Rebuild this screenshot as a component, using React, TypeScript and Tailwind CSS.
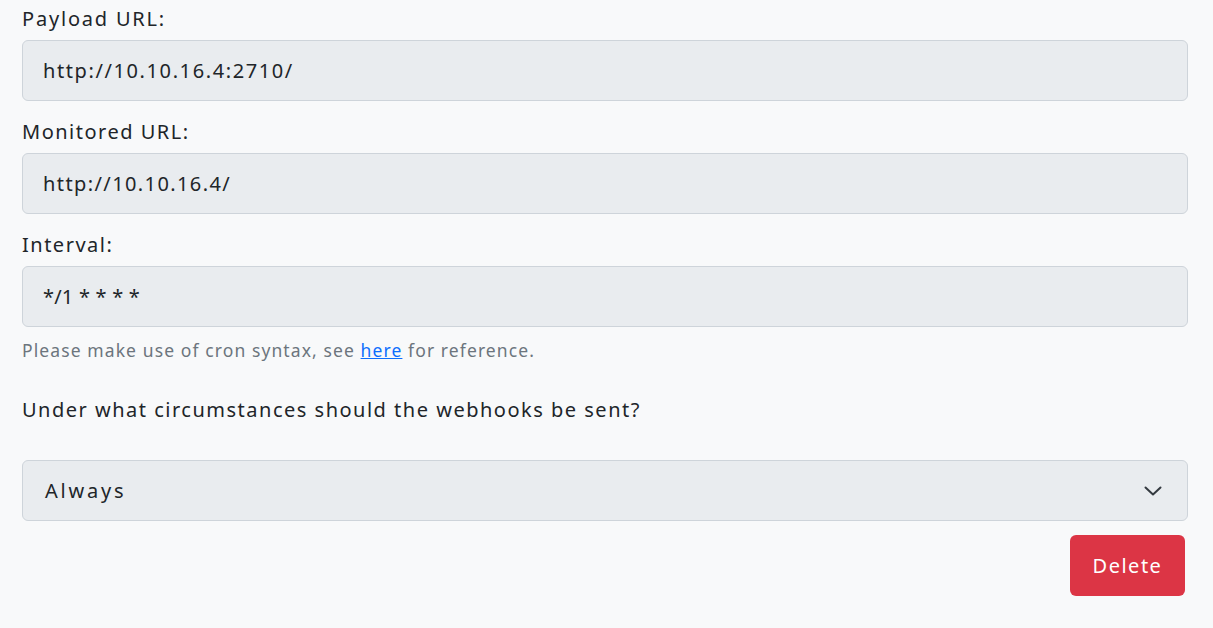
import React from "react";

const font = { fontFamily: '"Noto Sans", "Open Sans", sans-serif' };

function Field({ label, value, lt, vt }: { label: string; value: string; lt: string; vt: string }) {
  return (
    <div className="flex flex-col">
      <label className={`text-[20px] leading-[30px] text-[#212529] mb-[6px] ${lt}`}>{label}</label>
      <div className={`h-[61px] w-full rounded-[6px] border border-[#ced4da] bg-[#e9ecef] pl-[20px] flex items-center text-[20px] text-[#212529] ${vt}`}>
        {value}
      </div>
    </div>
  );
}

export default function App() {
  return (
    <div className="min-h-[628px] w-full bg-[#f8f9fa]" style={font}>
      <div className="w-[1166px] ml-[22px] pt-[4px] flex flex-col">
        <Field label="Payload URL:" value="http://10.10.16.4:2710/" lt="tracking-[1.8px]" vt="tracking-[1.6px]" />
        <div className="h-[16px]" />
        <Field label="Monitored URL:" value="http://10.10.16.4/" lt="tracking-[1.5px]" vt="tracking-[1.4px]" />
        <div className="h-[16px]" />
        <Field label="Interval:" value="*/1 * * * *" lt="tracking-[1.5px]" vt="tracking-[0.2px]" />
        <div className="mt-[10px] text-[17.5px] leading-[26px] tracking-[1.1px] text-[#6c757d]">
          Please make use of cron syntax, see{" "}
          <a href="#" className="text-[#0d6efd] underline">here</a> for reference.
        </div>
        <div className="mt-[32px] text-[20px] leading-[30px] tracking-[1.5px] text-[#212529]">
          Under what circumstances should the webhooks be sent?
        </div>
        <div className="mt-[35px] h-[61px] w-full rounded-[6px] border border-[#ced4da] bg-[#e9ecef] pl-[22px] pr-[25px] flex items-center justify-between text-[20px] tracking-[2.8px] text-[#212529]">
          <span>Always</span>
          <svg width="18" height="10" viewBox="0 0 18 10" fill="none" stroke="#343a40" strokeWidth="2" strokeLinecap="round" strokeLinejoin="round">
            <path d="M1.5 1.5 L9 8.5 L16.5 1.5" />
          </svg>
        </div>
        <div className="mt-[14px] flex justify-end pr-[3px]">
          <button className="h-[61px] w-[115px] rounded-[6px] bg-[#dc3545] text-white text-[20px] tracking-[1.5px]">Delete</button>
        </div>
      </div>
    </div>
  );
}
